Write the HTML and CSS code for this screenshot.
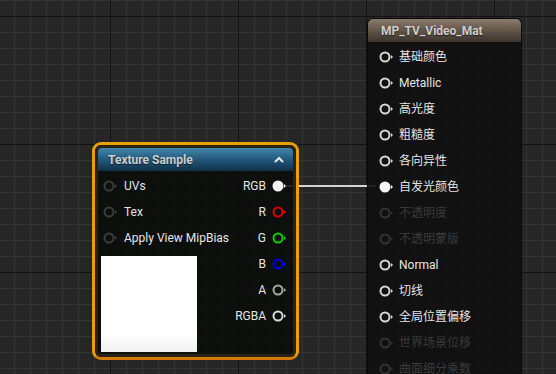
FILE: index.html
```html
<!DOCTYPE html>
<html lang="zh-CN">
<head>
    <meta charset="UTF-8">
    <meta name="viewport" content="width=device-width, initial-scale=1.0">
    <title>Material Graph</title>
    <link rel="stylesheet" href="styles.css">
</head>
<body>
    <div class="graph">
        <!-- Wire from RGB to emissive -->
        <div class="wire"></div>

        <!-- Texture Sample node -->
        <div class="node texture-node">
            <div class="node-inner">
                <div class="node-header blue">
                    <span>Texture Sample</span>
                    <svg class="chevron" width="10" height="7" viewBox="0 0 10 7"><polyline points="1,6 5,2 9,6" fill="none" stroke="#e8e8e8" stroke-width="2"/></svg>
                </div>
                <div class="node-body">
                    <div class="inputs">
                        <div class="pin-row dim-pin"><svg class="pin" viewBox="0 0 14 12"><circle cx="6" cy="6" r="4.5"/><polygon points="12,4 14,6 12,8"/></svg><span>UVs</span></div>
                        <div class="pin-row dim-pin"><svg class="pin" viewBox="0 0 14 12"><circle cx="6" cy="6" r="4.5"/><polygon points="12,4 14,6 12,8"/></svg><span>Tex</span></div>
                        <div class="pin-row dim-pin"><svg class="pin" viewBox="0 0 14 12"><circle cx="6" cy="6" r="4.5"/><polygon points="12,4 14,6 12,8"/></svg><span>Apply View MipBias</span></div>
                        <div class="preview"></div>
                    </div>
                    <div class="outputs">
                        <div class="pin-row out"><span>RGB</span><svg class="pin filled white" viewBox="0 0 14 12"><circle cx="6" cy="6" r="4.5"/><polygon points="12,4 14,6 12,8"/></svg></div>
                        <div class="pin-row out"><span>R</span><svg class="pin red" viewBox="0 0 14 12"><circle cx="6" cy="6" r="4.5"/><polygon points="12,4 14,6 12,8"/></svg></div>
                        <div class="pin-row out"><span>G</span><svg class="pin green" viewBox="0 0 14 12"><circle cx="6" cy="6" r="4.5"/><polygon points="12,4 14,6 12,8"/></svg></div>
                        <div class="pin-row out"><span>B</span><svg class="pin blue-pin" viewBox="0 0 14 12"><circle cx="6" cy="6" r="4.5"/><polygon points="12,4 14,6 12,8"/></svg></div>
                        <div class="pin-row out"><span>A</span><svg class="pin grey" viewBox="0 0 14 12"><circle cx="6" cy="6" r="4.5"/><polygon points="12,4 14,6 12,8"/></svg></div>
                        <div class="pin-row out"><span>RGBA</span><svg class="pin light" viewBox="0 0 14 12"><circle cx="6" cy="6" r="4.5"/><polygon points="12,4 14,6 12,8"/></svg></div>
                    </div>
                </div>
            </div>
        </div>

        <!-- Material result node -->
        <div class="node material-node">
            <div class="node-header brown">MP_TV_Video_Mat</div>
            <div class="material-body">
                <div class="pin-row mat"><svg class="pin light" viewBox="0 0 14 12"><circle cx="6" cy="6" r="4.5"/><polygon points="12,4 14,6 12,8"/></svg><span>基础颜色</span></div>
                <div class="pin-row mat"><svg class="pin light" viewBox="0 0 14 12"><circle cx="6" cy="6" r="4.5"/><polygon points="12,4 14,6 12,8"/></svg><span>Metallic</span></div>
                <div class="pin-row mat"><svg class="pin light" viewBox="0 0 14 12"><circle cx="6" cy="6" r="4.5"/><polygon points="12,4 14,6 12,8"/></svg><span>高光度</span></div>
                <div class="pin-row mat"><svg class="pin light" viewBox="0 0 14 12"><circle cx="6" cy="6" r="4.5"/><polygon points="12,4 14,6 12,8"/></svg><span>粗糙度</span></div>
                <div class="pin-row mat"><svg class="pin light" viewBox="0 0 14 12"><circle cx="6" cy="6" r="4.5"/><polygon points="12,4 14,6 12,8"/></svg><span>各向异性</span></div>
                <div class="pin-row mat"><svg class="pin filled white" viewBox="0 0 14 12"><circle cx="6" cy="6" r="4.5"/><polygon points="12,4 14,6 12,8"/></svg><span>自发光颜色</span></div>
                <div class="pin-row mat disabled"><svg class="pin" viewBox="0 0 14 12"><circle cx="6" cy="6" r="4.5"/><polygon points="12,4 14,6 12,8"/></svg><span>不透明度</span></div>
                <div class="pin-row mat disabled"><svg class="pin" viewBox="0 0 14 12"><circle cx="6" cy="6" r="4.5"/><polygon points="12,4 14,6 12,8"/></svg><span>不透明蒙版</span></div>
                <div class="pin-row mat"><svg class="pin light" viewBox="0 0 14 12"><circle cx="6" cy="6" r="4.5"/><polygon points="12,4 14,6 12,8"/></svg><span>Normal</span></div>
                <div class="pin-row mat"><svg class="pin light" viewBox="0 0 14 12"><circle cx="6" cy="6" r="4.5"/><polygon points="12,4 14,6 12,8"/></svg><span>切线</span></div>
                <div class="pin-row mat"><svg class="pin light" viewBox="0 0 14 12"><circle cx="6" cy="6" r="4.5"/><polygon points="12,4 14,6 12,8"/></svg><span>全局位置偏移</span></div>
                <div class="pin-row mat disabled"><svg class="pin" viewBox="0 0 14 12"><circle cx="6" cy="6" r="4.5"/><polygon points="12,4 14,6 12,8"/></svg><span>世界场景位移</span></div>
                <div class="pin-row mat disabled"><svg class="pin" viewBox="0 0 14 12"><circle cx="6" cy="6" r="4.5"/><polygon points="12,4 14,6 12,8"/></svg><span>曲面细分乘数</span></div>
            </div>
        </div>
    </div>
</body>
</html>
```

FILE: styles.css
```css
/* Global */
* { box-sizing: border-box; margin: 0; padding: 0; }
body { background: #262626; font-family: Roboto, "Noto Sans CJK SC", sans-serif; font-size: 12px; color: #e4e4e4; }

/* Graph canvas with minor and major grid lines */
.graph {
    position: relative; width: 556px; height: 374px; overflow: hidden;
    background-color: #262626;
    background-image:
        linear-gradient(to right, #121212 1px, transparent 1px),
        linear-gradient(to bottom, #121212 1px, transparent 1px),
        linear-gradient(to right, #343434 1px, transparent 1px),
        linear-gradient(to bottom, #343434 1px, transparent 1px);
    background-size: 128px 128px, 128px 128px, 16px 16px, 16px 16px;
    background-position: 110px 0, 0 16px, 14px 0, 0 0;
}

.wire { position: absolute; left: 286px; top: 185px; width: 90px; height: 2px; background: #d4d4d4; }

/* Nodes */
.node { position: absolute; }
.node-header { display: flex; align-items: center; justify-content: space-between; height: 23px; padding: 0 10px; font-weight: bold; color: #cdcdcd; text-shadow: 0 1px 1px rgba(0,0,0,0.6); }
.node-header.blue { background: linear-gradient(to bottom, #4486ac 0%, #22597c 50%, #10304a 100%); border-radius: 4px 4px 0 0; }
.node-header.brown { background: linear-gradient(to bottom, #8a7b6c 0%, #5e5246 55%, #3c342c 100%); border-radius: 5px 5px 0 0; padding-left: 13px; }
.chevron { margin-right: -1px; }

/* Texture sample node */
.texture-node { left: 92px; top: 142px; width: 207px; height: 218px; border: 3px solid #eaa000; border-bottom-color: #d67a00; border-radius: 9px; }
.node-inner { height: 100%; border: 3px solid #2a2214; border-radius: 6px; background: rgba(10, 12, 10, 0.88); }
.node-body { display: flex; justify-content: space-between; padding-top: 2px; }
.inputs { display: flex; flex-direction: column; }
.outputs { display: flex; flex-direction: column; padding-right: 7px; }
.preview { width: 96px; height: 96px; margin: 5px 0 0 3px; background: linear-gradient(to bottom, #ffffff 80%, #f0f0f0); }

/* Pins */
.pin-row { display: flex; align-items: center; height: 26px; white-space: nowrap; }
.pin-row.dim-pin { padding-left: 5px; gap: 7px; }
.pin-row.out { justify-content: flex-end; gap: 6px; }
.pin { width: 14px; height: 12px; flex-shrink: 0; fill: none; stroke: currentColor; stroke-width: 2; }
.pin polygon { fill: currentColor; stroke: none; }
.pin.filled circle { fill: currentColor; }
.dim-pin .pin { color: #3c3c3c; }
.pin.white { color: #f4f4f4; }
.pin.red { color: #e00000; }
.pin.green { color: #00d400; }
.pin.blue-pin { color: #0000e6; }
.pin.grey { color: #a8a8a8; }
.pin.light { color: #d8d8d8; }

/* Material result node */
.material-node { left: 367px; top: 18px; width: 155px; height: 380px; border: 1px solid #0a0a0a; border-radius: 6px; background: rgba(16, 16, 16, 0.9); }
.material-body { display: flex; flex-direction: column; padding: 2px 0 0 11px; }
.pin-row.mat { flex-shrink: 0; gap: 6px; }
.pin-row.mat span { line-height: 14px; }
.pin-row.disabled { color: #3a3a3a; }
.pin-row.disabled .pin { color: #333333; }
```
